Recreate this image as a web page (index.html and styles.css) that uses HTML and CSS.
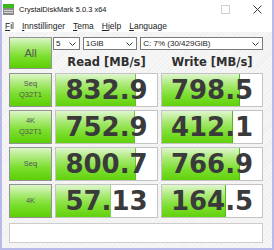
FILE: index.html
```html
<!DOCTYPE html>
<html lang="nb">
<head>
  <meta charset="UTF-8">
  <title>CrystalDiskMark 5.0.3 x64</title>
  <link rel="stylesheet" href="styles.css">
</head>
<body>

  <div class="window">

    <!-- Title bar -->
    <div class="titlebar">
      <svg class="app-icon" width="11" height="11" viewBox="0 0 11 11">
        <rect x="0" y="0" width="11" height="4" fill="#3cb81e"/>
        <rect x="0" y="4" width="11" height="7" fill="#8a8a8a"/>
        <rect x="1" y="6" width="9" height="1" fill="#d8d8d8"/>
        <rect x="1" y="8" width="9" height="1" fill="#d8d8d8"/>
      </svg>
      <span class="title">CrystalDiskMark 5.0.3 x64</span>
      <div class="controls">
        <svg width="9" height="9" viewBox="0 0 9 9">
          <rect x="0.5" y="0.5" width="8" height="8" fill="none" stroke="#cfcfcf"/>
        </svg>
        <svg width="9" height="9" viewBox="0 0 9 9">
          <path d="M0.5 0.5 L8.5 8.5 M8.5 0.5 L0.5 8.5" stroke="#333" stroke-width="1"/>
        </svg>
      </div>
    </div>

    <!-- Menu -->
    <div class="menubar">
      <span><u>F</u>il</span>
      <span><u>I</u>nnstillinger</span>
      <span><u>T</u>ema</span>
      <span><u>H</u>jelp</span>
      <span><u>L</u>anguage</span>
    </div>

    <!-- Client -->
    <div class="client">
      <div class="grid">
        <button class="all">All</button>

        <div class="selects">
          <div class="select sel-count">5
            <svg class="chev" width="7" height="4" viewBox="0 0 7 4"><path d="M0.5 0.5 L3.5 3.5 L6.5 0.5" fill="none" stroke="#333"/></svg>
          </div>
          <div class="select sel-size">1GiB
            <svg class="chev" width="7" height="4" viewBox="0 0 7 4"><path d="M0.5 0.5 L3.5 3.5 L6.5 0.5" fill="none" stroke="#333"/></svg>
          </div>
          <div class="select sel-drive">C: 7% (30/429GiB)
            <svg class="chev" width="7" height="4" viewBox="0 0 7 4"><path d="M0.5 0.5 L3.5 3.5 L6.5 0.5" fill="none" stroke="#333"/></svg>
          </div>
        </div>

        <div class="head">Read [MB/s]</div>
        <div class="head">Write [MB/s]</div>

        <button class="label">Seq<br>Q32T1</button>
        <div class="cell" style="--w: 79%">832.9</div>
        <div class="cell" style="--w: 78%">798.5</div>

        <button class="label">4K<br>Q32T1</button>
        <div class="cell" style="--w: 78%">752.9</div>
        <div class="cell" style="--w: 71%">412.1</div>

        <button class="label">Seq</button>
        <div class="cell" style="--w: 79%">800.7</div>
        <div class="cell" style="--w: 78%">766.9</div>

        <button class="label">4K</button>
        <div class="cell" style="--w: 54%">57.13</div>
        <div class="cell" style="--w: 64%">164.5</div>

        <div class="comment"></div>
      </div>
    </div>

  </div>

</body>
</html>
```

FILE: styles.css
```css
body {
  margin: 0;
  font-family: "Liberation Sans", Arial, sans-serif;
  color: #222;
}

.window {
  width: 274px;
  height: 250px;
  box-sizing: border-box;
  border: 2px solid #b9b9ea;
  border-top: none;
  background: #fff;
  display: flex;
  flex-direction: column;
}

.titlebar {
  height: 19px;
  display: flex;
  align-items: center;
  padding-left: 1px;
}

.app-icon {
  margin-right: 5px;
}

.title {
  font-size: 7.5px;
  color: #111;
}

.controls {
  margin-left: auto;
  display: flex;
  align-items: center;
  gap: 23px;
  padding-right: 10px;
}

.menubar {
  height: 13px;
  display: flex;
  align-items: center;
  gap: 8px;
  padding-left: 3px;
  font-size: 8.5px;
}

.client {
  flex: 1;
  background: repeating-linear-gradient(-45deg, #f6f6f6 0 2px, #efefef 2px 3px);
  padding: 5px 0 0 7px;
}

.grid {
  display: grid;
  grid-template-columns: 43px 103px 102px;
  grid-template-rows: 14px 16px repeat(4, 34px) 20px;
  column-gap: 3px;
  row-gap: 3px;
}

.all,
.label {
  margin: 0;
  padding: 0;
  border: 1px solid #939393;
  background: linear-gradient(#dcf6c8, #b2ec84 25%, #7ddf30 60%, #5ccf05);
  font-family: "Liberation Sans", Arial, sans-serif;
  color: #555;
  cursor: pointer;
}

.all {
  grid-row: 1 / span 2;
  height: 32px;
  font-size: 11px;
}

.label {
  font-size: 7.5px;
  line-height: 1.45;
}

.selects {
  grid-column: 2 / span 2;
  display: flex;
  gap: 3px;
  margin-left: -2px;
}

.select {
  height: 13px;
  box-sizing: border-box;
  border: 1px solid #7a7a7a;
  background: #fff;
  font-size: 8px;
  line-height: 11px;
  padding: 0 3px 0 2px;
  display: flex;
  align-items: center;
  justify-content: space-between;
}

.sel-count { width: 27px; }
.sel-size { width: 55px; }
.sel-drive { width: 124px; }

.head {
  font-family: "DejaVu Sans", Verdana, sans-serif;
  font-weight: bold;
  font-size: 11.5px;
  color: #2f2f2f;
  text-align: center;
  line-height: 16px;
}

.cell {
  box-sizing: border-box;
  border: 1px solid #c3c3c3;
  background:
    linear-gradient(to left, #52b81c 1px, transparent 1px) no-repeat left top / var(--w) 100%,
    linear-gradient(#dff6cf, #aeea7c 30%, #7edf32 65%, #62d10c) no-repeat left top / var(--w) 100%,
    #fff;
  font-family: "DejaVu Sans", Verdana, sans-serif;
  font-weight: bold;
  font-size: 26px;
  line-height: 32px;
  color: #3a3a3a;
  text-align: center;
}

.comment {
  grid-column: 1 / span 3;
  margin-top: 2px;
  height: 20px;
  box-sizing: border-box;
  border: 1px solid #cdcdcd;
  background: #fff;
}
```
